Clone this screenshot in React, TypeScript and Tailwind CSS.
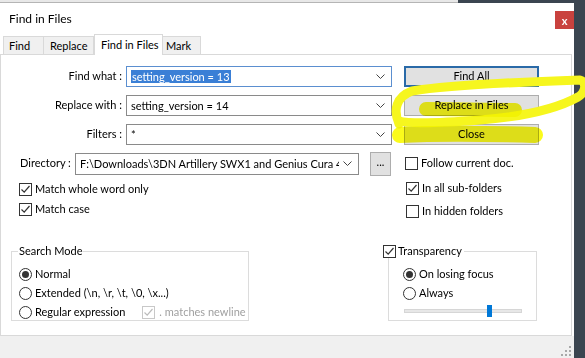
import { ReactNode } from 'react'

function Check({ checked = false, disabled = false }: { checked?: boolean; disabled?: boolean }) {
  const c = disabled ? '#bcbcbc' : '#333333'
  return (
    <span className={`w-[13px] h-[13px] border bg-white flex items-center justify-center shrink-0 ${disabled ? 'border-[#c8c8c8]' : 'border-[#333]'}`}>
      {checked && (
        <svg width="11" height="11" viewBox="0 0 11 11"><path d="M1.5 5.5 L4.2 8.2 L9.5 2" fill="none" stroke={c} strokeWidth="1.2" /></svg>
      )}
    </span>
  )
}

function Radio({ checked = false }: { checked?: boolean }) {
  return (
    <span className="w-[13px] h-[13px] rounded-full border border-[#333] bg-white flex items-center justify-center shrink-0">
      {checked && <span className="w-[7px] h-[7px] rounded-full bg-[#333]" />}
    </span>
  )
}

function Combo({ value, width, focused = false, selected = false }: { value: string; width: string; focused?: boolean; selected?: boolean }) {
  return (
    <div className={`${width} h-full bg-white border flex items-center pl-[4px] pr-[6px] ${focused ? 'border-[#5b8fd0]' : 'border-[#8a8a8a]'}`}>
      <span className="flex-1 overflow-hidden leading-[14px]">
        {selected ? <span className="bg-[#3a7fd6] text-white px-[1px]">{value}</span> : value}
      </span>
      <svg width="9" height="5" viewBox="0 0 9 5" className="shrink-0 ml-[4px]"><path d="M0.5 0.5 L4.5 4.5 L8.5 0.5" fill="none" stroke="#444" strokeWidth="1" /></svg>
    </div>
  )
}

function Btn({ children, focused = false }: { children: ReactNode; focused?: boolean }) {
  return (
    <div className={`w-[135px] h-[21px] bg-[#e1e1e1] flex items-center justify-center ${focused ? 'border-2 border-[#2a6aa8]' : 'border border-[#adadad]'}`}>
      {children}
    </div>
  )
}

function Row({ label, children, button }: { label: string; children: ReactNode; button: ReactNode }) {
  return (
    <div className="flex items-center h-[21px]">
      <div className="w-[122px] text-right pr-[1px]">{label}</div>
      <div className="ml-[3px] h-full flex">{children}</div>
      <div className="ml-[12px]">{button}</div>
    </div>
  )
}

export default function App() {
  return (
    <div className="relative w-[585px] h-[358px] bg-[#3b4550] overflow-hidden font-['Lato',sans-serif] text-[11px] text-black whitespace-nowrap">
      <div className="h-[3px] w-[458px] bg-[#e8e8e8] border-b border-[#b5b5b5]" />
      <div className="w-[574px] h-[355px] bg-white flex flex-col">
        {/* title */}
        <div className="h-[31px] flex items-start">
          <div className="pl-[9px] pt-[7px] flex-1 text-[12px]">Find in Files</div>
          <div className="mt-[8px] w-[19px] h-[18px] bg-[#c9423e] text-white text-[11px] font-bold flex items-center justify-center leading-none">x</div>
        </div>
        {/* tabs */}
        <div className="h-[20px] flex items-end pl-[3px] relative z-10">
          <div className="h-[18px] w-[41px] bg-[#f0f0f0] border border-b-0 border-[#d9d9d9] pl-[5px] leading-[17px]">Find</div>
          <div className="h-[18px] w-[50px] bg-[#f0f0f0] border border-b-0 border-l-0 border-[#d9d9d9] pl-[6px] leading-[17px]">Replace</div>
          <div className="h-[21px] w-[69px] bg-white border border-b-0 border-[#d9d9d9] pl-[6px] leading-[19px] -mb-[1px]">Find in Files</div>
          <div className="h-[18px] w-[38px] bg-[#f0f0f0] border border-b-0 border-l-0 border-[#d9d9d9] pl-[3px] leading-[17px]">Mark</div>
        </div>
        {/* panel */}
        <div className="w-[572px] h-[282px] border border-[#d9d9d9] bg-white flex flex-col">
          <div className="mt-[11px] flex flex-col">
            <Row label="Find what :" button={<Btn focused>Find All</Btn>}>
              <Combo value="setting_version = 13" width="w-[266px]" focused selected />
            </Row>
            <div className="mt-[8px]">
              <Row label="Replace with :" button={<Btn>Replace in Files</Btn>}>
                <Combo value="setting_version = 14" width="w-[266px]" />
              </Row>
            </div>
            <div className="mt-[8px]">
              <Row label="Filters :" button={<Btn>Close</Btn>}>
                <Combo value="*" width="w-[266px]" />
              </Row>
            </div>
            <div className="mt-[7px] flex items-center h-[23px]">
              <div className="pl-[19px] w-[73px]">Directory :</div>
              <div className="ml-[1px] h-[22px] flex">
                <Combo value="F:\Downloads\3DN Artillery SWX1 and Genius Cura 4.6" width="w-[284px]" />
              </div>
              <div className="ml-[11px] w-[21px] h-[24px] bg-[#e1e1e1] border border-[#adadad] flex items-center justify-center leading-none pb-[4px]">...</div>
              <div className="ml-[14px] flex items-center gap-[3px]">
                <Check />
                <span>Follow current doc.</span>
              </div>
            </div>
          </div>
          <div className="flex mt-[4px]">
            <div className="pl-[18px] w-[404px] flex flex-col pt-[2px] gap-[4px]">
              <div className="flex items-center h-[16px] gap-[3px]"><Check checked /><span>Match whole word only</span></div>
              <div className="flex items-center h-[16px] gap-[3px]"><Check checked /><span>Match case</span></div>
            </div>
            <div className="pl-[1px] pt-[1px] flex flex-col gap-[7px]">
              <div className="flex items-center h-[16px] gap-[3px]"><Check checked /><span>In all sub-folders</span></div>
              <div className="flex items-center h-[16px] gap-[3px]"><Check /><span>In hidden folders</span></div>
            </div>
          </div>
          <div className="flex mt-[25px]">
            <fieldset className="ml-[10px] w-[238px] min-w-0 h-[77px] border border-[#dcdcdc] px-[7px]">
              <legend className="px-[1px] ml-[-1px] leading-[14px]">Search Mode</legend>
              <div className="flex flex-col gap-[5px] mt-[9px]">
                <div className="flex items-center h-[14px] gap-[3px]"><Radio checked /><span>Normal</span></div>
                <div className="flex items-center h-[14px] gap-[3px]"><Radio /><span>Extended (\n, \r, \t, \0, \x...)</span></div>
                <div className="flex items-center h-[14px] gap-[3px]">
                  <Radio /><span>Regular expression</span>
                  <span className="ml-[14px] flex items-center gap-[4px] text-[#a0a0a0]"><Check checked disabled /><span>. matches newline</span></span>
                </div>
              </div>
            </fieldset>
            <fieldset className="ml-[139px] w-[149px] min-w-0 h-[77px] border border-[#dcdcdc] pl-[14px]">
              <legend className="ml-[-20px] pr-[2px] flex items-center gap-[2px] leading-[14px]"><Check checked /><span>Transparency</span></legend>
              <div className="flex flex-col gap-[5px] mt-[9px]">
                <div className="flex items-center h-[14px] gap-[3px]"><Radio checked /><span>On losing focus</span></div>
                <div className="flex items-center h-[14px] gap-[3px]"><Radio /><span>Always</span></div>
              </div>
              <div className="relative mt-[9px] ml-[1px] w-[118px] h-[4px] bg-[#e7e7e7] border border-[#d6d6d6]">
                <div className="absolute left-[82px] top-[-5px] w-[5px] h-[12px] bg-[#0078d7]" />
              </div>
            </fieldset>
          </div>
        </div>
        {/* footer */}
        <div className="flex-1 bg-[#f0f0f0] flex items-end justify-end pr-[3px] pb-[2px]">
          <svg width="10" height="10" viewBox="0 0 10 10">
            <g fill="#a8a8a8">
              <rect x="8" y="0" width="2" height="2" />
              <rect x="4" y="4" width="2" height="2" />
              <rect x="8" y="4" width="2" height="2" />
              <rect x="0" y="8" width="2" height="2" />
              <rect x="4" y="8" width="2" height="2" />
              <rect x="8" y="8" width="2" height="2" />
            </g>
          </svg>
        </div>
      </div>
      {/* highlighter scribbles */}
      <svg className="absolute inset-0 pointer-events-none" width="585" height="358" viewBox="0 0 585 358">
        <path d="M399 124 C393 110 396 97 412 91 C450 85 520 82 580 80 C587 82 586 92 578 97 C560 107 530 116 480 120 C440 123 410 124 399 121" fill="none" stroke="#f6f61e" strokeWidth="9" strokeLinecap="round" strokeLinejoin="round" />
      </svg>
      <svg className="absolute inset-0 pointer-events-none mix-blend-multiply" width="585" height="358" viewBox="0 0 585 358">
        <g fill="none" stroke="#fbfb1c" strokeLinecap="round" strokeLinejoin="round">
          <path d="M426 109 L515 110" strokeWidth="14" />
          <path d="M400 135 C440 133 500 134 535 135" strokeWidth="16" />
        </g>
      </svg>
    </div>
  )
}
